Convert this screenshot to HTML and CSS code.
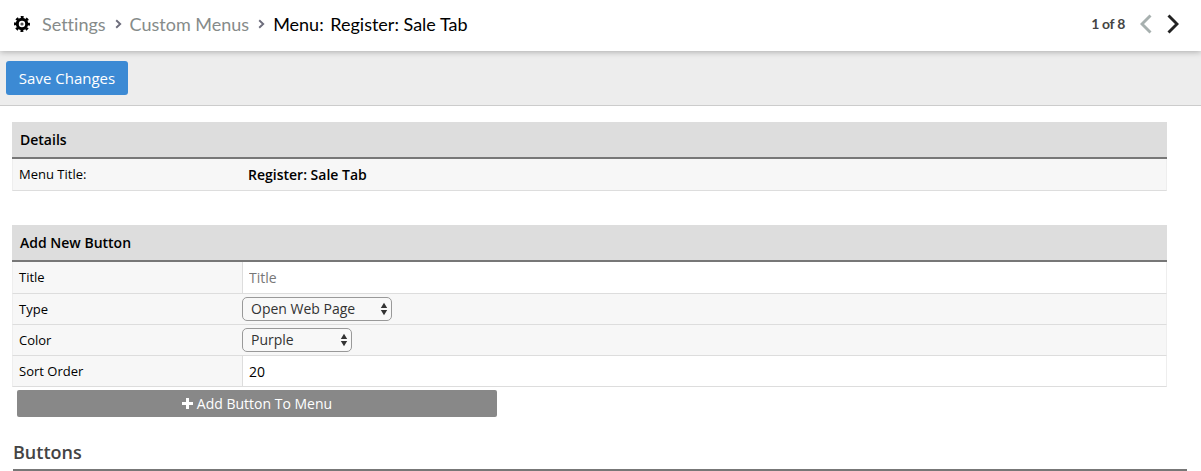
FILE: index.html
```html
<!DOCTYPE html>
<html lang="en">
<head>
<meta charset="utf-8">
<title>Menu: Register: Sale Tab</title>
<link rel="stylesheet" href="styles.css">
</head>
<body>
<header class="topbar">
  <svg class="gear" width="16" height="16" viewBox="0 0 16 16"><g fill="none" stroke="#000"><circle cx="8" cy="8" r="4.700" stroke-width="3"/><circle cx="8" cy="8" r="6.900" stroke-width="2.2" stroke-dasharray="2.900 2.519" stroke-dashoffset="1.450"/></g><circle cx="8" cy="8" r="1.600" fill="#555"/></svg>
  <nav class="crumbs">
    <a class="crumb settings">Settings</a>
    <svg class="sep" width="7" height="10" viewBox="0 0 7 10"><path d="M1.200 1.200 5.200 5l-4 3.800"/></svg>
    <a class="crumb custom">Custom Menus</a>
    <svg class="sep" width="7" height="10" viewBox="0 0 7 10"><path d="M1.200 1.200 5.200 5l-4 3.800"/></svg>
    <span class="current">Menu: <span class="name">Register: Sale Tab</span></span>
  </nav>
  <div class="pager">
    <span class="count">1 of 8</span>
    <svg class="arrow prev" width="12" height="20" viewBox="0 0 12 20"><path d="M10.500 1.500 2 10l8.500 8.500"/></svg>
    <svg class="arrow next" width="12" height="20" viewBox="0 0 12 20"><path d="M1.500 1.500 10 10l-8.500 8.500"/></svg>
  </div>
</header>
<div class="toolbar"><button class="save">Save Changes</button></div>
<main>
  <section class="panel details">
    <h2>Details</h2>
    <div class="row"><div class="label">Menu Title:</div><div class="value strong">Register: Sale Tab</div></div>
  </section>
  <section class="panel">
    <h2>Add New Button</h2>
    <div class="row"><label class="label">Title</label><div class="field"><input class="title-input" placeholder="Title"></div></div>
    <div class="row"><label class="label">Type</label><div class="select type"><span>Open Web Page</span><svg width="8" height="14" viewBox="0 0 8 14"><path d="M4 .8 7.200 6H.8zM4 13.200.8 8h6.400z"/></svg></div></div>
    <div class="row"><label class="label">Color</label><div class="select color"><span>Purple</span><svg width="8" height="14" viewBox="0 0 8 14"><path d="M4 .8 7.200 6H.8zM4 13.200.8 8h6.400z"/></svg></div></div>
    <div class="row"><label class="label">Sort Order</label><div class="field"><input class="order-input" value="20"></div></div>
  </section>
  <button class="add"><svg width="11" height="11" viewBox="0 0 11 11"><path d="M4 0h3v4h4v3H7v4H4V7H0V4h4z"/></svg><span>Add Button To Menu</span></button>
  <h3 class="buttons-heading">Buttons</h3>
</main>
</body>
</html>
```

FILE: styles.css
```css
* { box-sizing: border-box; }
body { margin: 0; height: 471px; overflow: hidden; background: #fff; color: #000; font-family: "Open Sans", sans-serif; font-size: 13px; }
button, input { font-family: inherit; border: 0; padding: 0; }
.topbar { position: relative; display: flex; align-items: center; height: 51px; padding: 0 22px 3px 14px; background: #fff; box-shadow: 0 1px 6px rgba(0,0,0,.28); font-family: Lato, sans-serif; font-size: 18px; font-variant-ligatures: none; }
.crumbs { display: flex; align-items: center; margin-left: 12px; white-space: nowrap; }
.crumb { color: #868b8a; }
.sep { margin: 0 8px 0 9px; fill: none; stroke: #6d6d7c; stroke-width: 1.9; }
.name { margin-left: 2px; }
.pager { display: flex; align-items: center; margin-left: auto; }
.count { margin-right: 15px; padding-bottom: 1px; color: #444; font-size: 14px; font-weight: 700; letter-spacing: -.3px; }
.arrow { fill: none; stroke-width: 2.9; }
.prev { margin-right: 15px; stroke: #a7b0af; }
.next { stroke: #222; }
.toolbar { height: 55px; padding: 10px 6px; background: #ededed; border-bottom: 1px solid #ccc; }
.save { display: block; width: 122px; height: 34px; background: #3c8ad4; border-radius: 3px; color: #fff; font-size: 15px; }
main { padding: 16px 0 0 12px; }
.panel { width: 1155px; }
.details { margin-bottom: 34px; }
h2 { height: 37px; margin: 0; padding: 0 8px; background: #ddd; border-bottom: 2px solid #777; font-size: 14px; font-weight: 600; line-height: 35px; }
.row { display: flex; height: 31px; background: #f7f7f7; border: 1px solid #eee; border-top: 0; border-bottom-color: #ddd; }
h2 + .row { height: 32px; }
.label { width: 229px; padding-left: 6px; line-height: 31px; }
.value { padding-left: 6px; line-height: 32px; }
.strong { font-size: 14px; font-weight: 600; }
.field { flex: 1; display: flex; border-left: 1px solid #ddd; }
.field input { width: 100%; padding: 0 0 1px 6px; background: #fff; color: #000; font-size: 14px; outline: 0; }
.field .order-input { padding: 1px 0 0 6px; }
.title-input::placeholder { color: #777; opacity: 1; }
.select { display: flex; align-items: center; justify-content: space-between; height: 24px; margin-top: 3px; padding: 0 3px 0 8px; background: #f8f8f8; border: 1px solid #999; border-radius: 5px; color: #333; font-size: 14px; }
.select span { padding-bottom: 2px; }
.select svg { fill: #333; }
.type { width: 150px; }
.color { width: 110px; }
.add { display: flex; align-items: center; justify-content: center; gap: 4px; width: 480px; height: 27px; margin: 3px 0 0 5px; background: #888; border-radius: 2px; color: #fff; font-size: 14px; }
.add svg { fill: #fff; }
.buttons-heading { width: 1174px; height: 54px; margin: 0 0 0 1px; padding-top: 23px; border-bottom: 2px solid #777; color: #444; font-size: 18px; font-weight: 600; line-height: 24px; }
```
